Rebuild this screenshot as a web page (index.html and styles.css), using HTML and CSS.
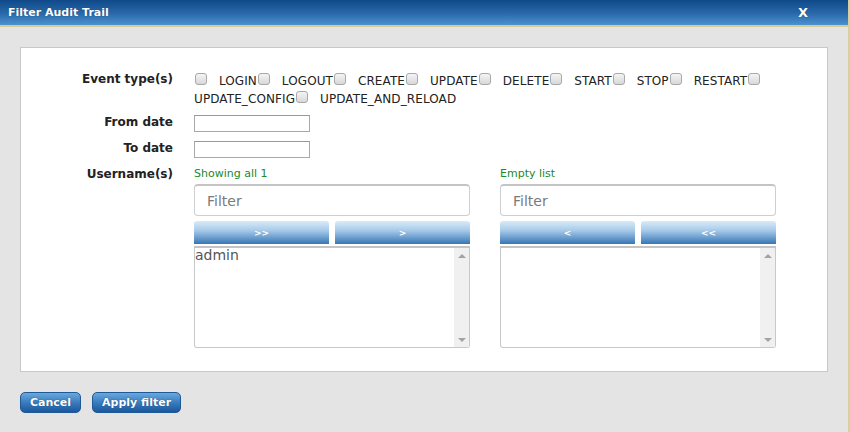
FILE: index.html
```html
<!DOCTYPE html>
<html>
<head>
    <meta charset="UTF-8">
    <title>Filter Audit Trail</title>
    <link rel="stylesheet" href="styles.css">
</head>
<body>
    <div class="dialog">
        <div class="titlebar">
            <span class="title">Filter Audit Trail</span>
            <span class="close">X</span>
        </div>

        <div class="content">
            <div class="panel">
                <div class="form">
                    <div class="field-label label-types">Event type(s)</div>
                    <div class="types"><input type="checkbox" class="cb"> LOGIN<input type="checkbox" class="cb"> LOGOUT<input type="checkbox" class="cb"> CREATE<input type="checkbox" class="cb"> UPDATE<input type="checkbox" class="cb"> DELETE<input type="checkbox" class="cb"> START<input type="checkbox" class="cb"> STOP<input type="checkbox" class="cb"> RESTART<input type="checkbox" class="cb"> UPDATE_CONFIG<input type="checkbox" class="cb"> UPDATE_AND_RELOAD</div>

                    <div class="field-label label-from">From date</div>
                    <div class="date-row date-from"><input type="text" class="date-input"></div>

                    <div class="field-label label-to">To date</div>
                    <div class="date-row date-to"><input type="text" class="date-input"></div>

                    <div class="field-label label-users">Username(s)</div>
                    <div class="lists">
                        <div class="list-col">
                            <div class="list-status">Showing all 1</div>
                            <input type="text" class="list-filter" placeholder="Filter">
                            <div class="move-btns">
                                <button class="move-btn">&gt;&gt;</button>
                                <button class="move-btn">&gt;</button>
                            </div>
                            <div class="listbox">
                                <div class="list-items">
                                    <div class="list-item">admin</div>
                                </div>
                                <div class="scrollbar">
                                    <span class="arrow-up"></span>
                                    <span class="arrow-down"></span>
                                </div>
                            </div>
                        </div>
                        <div class="list-col">
                            <div class="list-status">Empty list</div>
                            <input type="text" class="list-filter" placeholder="Filter">
                            <div class="move-btns">
                                <button class="move-btn">&lt;</button>
                                <button class="move-btn">&lt;&lt;</button>
                            </div>
                            <div class="listbox">
                                <div class="list-items"></div>
                                <div class="scrollbar">
                                    <span class="arrow-up"></span>
                                    <span class="arrow-down"></span>
                                </div>
                            </div>
                        </div>
                    </div>
                </div>
            </div>

            <div class="actions">
                <button class="btn">Cancel</button>
                <button class="btn">Apply filter</button>
            </div>
        </div>
    </div>
</body>
</html>
```

FILE: styles.css
```css
body {
    margin: 0;
    font-family: "DejaVu Sans", Verdana, sans-serif;
    background-color: #e4e4e4;
}
.dialog {
    width: 850px;
    height: 432px;
    box-sizing: border-box;
    background-color: #e4e4e4;
    border-right: 2px solid #d8d0a0;
    overflow: hidden;
}
.titlebar {
    display: flex;
    align-items: center;
    justify-content: space-between;
    height: 25px;
    padding: 0 40px 0 8px;
    background: linear-gradient(to bottom, #0f4989 0%, #2a6aaa 55%, #4c92d0 100%);
    border-bottom: 2px solid #d6cc98;
    color: white;
}
.title {
    font-size: 11px;
    font-weight: bold;
    text-shadow: 0 0 1px #0b3566;
}
.close {
    font-size: 13px;
    font-weight: bold;
    text-shadow: 0 0 1px #0b3566;
}
.content {
    padding: 20px 0 0 20px;
}
.panel {
    width: 808px;
    box-sizing: border-box;
    padding: 24px 0 23px 0;
    background-color: white;
    border: 1px solid #c8c8c8;
}
.form {
    display: grid;
    grid-template-columns: 152px 582px;
    column-gap: 21px;
    align-items: start;
}
.field-label {
    font-size: 12px;
    font-weight: bold;
    color: #222;
    text-align: right;
}
.label-types {
    line-height: 14px;
}
.label-from, .label-to {
    line-height: 17px;
}
.label-from {
    margin-top: 6px;
}
.label-to {
    margin-top: 8px;
}
.label-users {
    margin-top: 9px;
    line-height: 14px;
}
.types {
    font-size: 12px;
    line-height: 18px;
    letter-spacing: 0.1px;
    color: #222;
}
.cb {
    -webkit-appearance: none;
    appearance: none;
    width: 12px;
    height: 12px;
    margin: 0 8px 0 1px;
    vertical-align: baseline;
    border: 1px solid #a8a8a8;
    border-radius: 3px;
    background: linear-gradient(to bottom, #f4f4f4, #d8d8d8);
    box-sizing: border-box;
}
.date-row {
    display: flex;
}
.date-from {
    margin-top: 7px;
}
.date-to {
    margin-top: 9px;
}
.date-input {
    width: 116px;
    height: 17px;
    box-sizing: border-box;
    margin: 0;
    border: 1px solid #a9a9a9;
    border-top-color: #999;
    padding: 0 2px;
}
.lists {
    display: flex;
    gap: 30px;
    margin-top: 9px;
}
.list-col {
    display: flex;
    flex-direction: column;
    width: 276px;
}
.list-status {
    font-size: 11px;
    line-height: 14px;
    color: #22891f;
}
.list-filter {
    margin: 3px 0 0 0;
    height: 32px;
    box-sizing: border-box;
    border: 1px solid #cfcfcf;
    border-top: 2px solid #c4c4c4;
    border-radius: 4px;
    padding: 0 12px;
    font-family: "DejaVu Sans", Verdana, sans-serif;
    font-size: 14px;
}
.list-filter::placeholder {
    color: #7a7a7a;
}
.move-btns {
    display: flex;
    gap: 6px;
    margin-top: 5px;
}
.move-btn {
    flex: 1;
    height: 23px;
    padding: 0;
    border: none;
    border-radius: 3px 3px 0 0;
    background: linear-gradient(to bottom, #d8ebf9 0%, #a9cbe9 40%, #3676b6 100%);
    color: white;
    font-family: "DejaVu Sans", Verdana, sans-serif;
    font-size: 9px;
    font-weight: bold;
}
.listbox {
    display: flex;
    height: 102px;
    margin-top: 2px;
    box-sizing: border-box;
    border: 1px solid #c8c8c8;
    border-top: 2px solid #c4c4c4;
    border-radius: 0 0 3px 3px;
}
.list-items {
    flex: 1;
}
.list-item {
    font-size: 14px;
    line-height: 15px;
    color: #555;
}
.scrollbar {
    display: flex;
    flex-direction: column;
    justify-content: space-between;
    align-items: center;
    width: 15px;
    padding: 6px 0 5px 0;
    box-sizing: border-box;
    background-color: #f0f0f0;
}
.arrow-up {
    width: 0;
    height: 0;
    border-left: 4px solid transparent;
    border-right: 4px solid transparent;
    border-bottom: 4px solid #a3a3a3;
}
.arrow-down {
    width: 0;
    height: 0;
    border-left: 4px solid transparent;
    border-right: 4px solid transparent;
    border-top: 4px solid #a3a3a3;
}
.actions {
    display: flex;
    gap: 11px;
    margin-top: 20px;
}
.btn {
    height: 21px;
    padding: 0 9px;
    border: 1px solid #1f5a96;
    border-radius: 5px;
    background: linear-gradient(to bottom, #6aa8dd 0%, #3a7cbf 50%, #1b579b 100%);
    color: white;
    font-family: "DejaVu Sans", Verdana, sans-serif;
    font-size: 11px;
    font-weight: bold;
    text-shadow: 0 0 1px #0b3566;
}
```
